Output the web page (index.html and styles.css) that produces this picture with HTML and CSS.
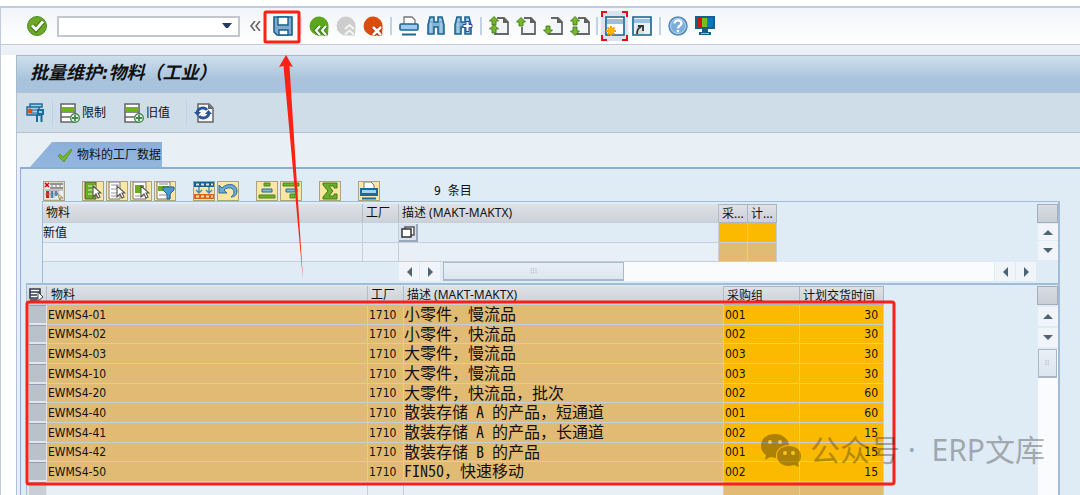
FILE: index.html
```html
<!DOCTYPE html>
<html lang="zh-CN">
<head>
<meta charset="utf-8">
<title>批量维护:物料（工业）</title>
<link rel="stylesheet" href="styles.css">
</head>
<body>
<svg class="sprite" aria-hidden="true">
  <symbol id="page" viewBox="0 0 20 20"><path d="M8 2h7l4 4v12H6v-7" fill="#f2f5f7" stroke="#666" stroke-width="1.800"/><path d="M14 1v6h6z" fill="#606060"/></symbol>
  <symbol id="up" viewBox="0 0 10 10"><path d="M5 .5 9.500 5H7v4H3V5H.5z" fill="#76b82a" stroke="#3f7a1c" stroke-width=".9"/></symbol>
  <symbol id="down" viewBox="0 0 10 10"><path d="M5 9.500 9.500 5H7V1H3v4H.5z" fill="#76b82a" stroke="#3f7a1c" stroke-width=".9"/></symbol>
  <symbol id="bino" viewBox="0 0 20 20"><path d="M4 1h4v5h4V1h4l2 8v9h-6v-7H8v7H2V9z" fill="#85b3d8" stroke="#1b678f" stroke-width="1.600"/><path d="M4 4h3M13 4h3M5 7v10M15 7v10" stroke="#c0daee"/></symbol>
  <symbol id="sheetplus" viewBox="0 0 20 20"><path d="M1 1h14v18H1z" fill="#fff" stroke="#666" stroke-width="1.600"/><path d="M2 4h12v4H2z" fill="#70b31d"/><path d="M1 9h14M1 14h10" stroke="#666" stroke-width="1.300"/><circle cx="15" cy="15" r="4.300" fill="#fff" stroke="#3d8b43" stroke-width="1.400"/><path d="M15 12v6M12 15h6" stroke="#3d8b43" stroke-width="1.800"/></symbol>
  <symbol id="cursor" viewBox="0 0 10 14"><path d="M1 1v11l3-3 2 4 2-1-2-4h3z" fill="#fff" stroke="#555" stroke-width="1.100"/></symbol>
</svg>

<header class="command-bar">
  <button class="tool" aria-label="确认"><svg viewBox="0 0 20 20"><circle cx="10" cy="10" r="9.500" fill="#6da724" stroke="#4b8c2b"/><path d="m5 9.500 4 4 7-8" fill="none" stroke="#42791c" stroke-width="5"/><path d="m5 9.500 4 4 7-8" fill="none" stroke="#fff" stroke-width="2.800"/></svg></button>
  <div class="combo"><input type="text" aria-label="命令"><button aria-label="打开列表"><svg viewBox="0 0 10 6"><path d="M0 0h10L6 5H4z" fill="#24386c"/></svg></button></div>
  <button class="collapse" aria-label="收起"><svg viewBox="0 0 12 10"><path d="M6 0 2 5l4 5M11 0 7 5l4 5" fill="none" stroke="#666" stroke-width="1.600"/></svg></button>
  <button class="tool" aria-label="保存"><svg viewBox="0 0 20 20"><path d="M1 1h18v18H4l-3-3z" fill="#82aacb" stroke="#15628c" stroke-width="1.600"/><path d="M5 1h10v8H5z" fill="#fff" stroke="#15628c" stroke-width="1.400"/><path d="M6 14h9v5H6z" fill="#fff" stroke="#15628c" stroke-width="1.400"/></svg></button>
  <span class="sep faint"></span>
  <button class="tool" aria-label="后退"><svg viewBox="0 0 20 20"><path d="M19.500 11A9.500 9.500 0 1 0 10 19.500h9z" fill="#5ba61c"/><path d="m11 10-4 4.500 4 4.500M17 10l-4 4.500 4 4.500" fill="none" stroke="#347b19" stroke-width="4"/><path d="m11 10-4 4.500 4 4.500M17 10l-4 4.500 4 4.500" fill="none" stroke="#fff" stroke-width="2.200"/></svg></button>
  <button class="tool" aria-label="退出"><svg viewBox="0 0 20 20"><path d="M19.500 11A9.500 9.500 0 1 0 10 19.500h9z" fill="#cdcdcd"/><path d="m9 13 4.500-4 4.500 4M9 18.500l4.500-4 4.500 4" fill="none" stroke="#f5f5f5" stroke-width="2"/></svg></button>
  <button class="tool" aria-label="取消"><svg viewBox="0 0 20 20"><path d="M19.500 11A9.500 9.500 0 1 0 10 19.500h9z" fill="#da4d0c"/><path d="m10 11 8 8m0-8-8 8" stroke="#9f340c" stroke-width="4.500"/><path d="m10 11 8 8m0-8-8 8" stroke="#fff" stroke-width="2.600"/></svg></button>
  <span class="sep"></span>
  <button class="tool" aria-label="打印"><svg viewBox="0 0 20 20"><path d="M5 8V1h8l3 3v4" fill="#fff" stroke="#777" stroke-width="1.300"/><rect x="1" y="8" width="18" height="6" rx="1" fill="#9ccaf0" stroke="#1b678f" stroke-width="1.600"/><path d="M2 15.500h16v1H2z" fill="#fff"/><path d="M3 18.500h14" stroke="#1b678f" stroke-width="2"/></svg></button>
  <button class="tool" aria-label="查找"><svg viewBox="0 0 20 20"><use href="#bino"/></svg></button>
  <button class="tool" aria-label="继续查找"><svg viewBox="0 0 20 20"><use href="#bino"/><path d="M13 5.500h3v3h3v3h-3v4h-3v-4h-3v-3h3z" fill="#fff" stroke="#3345a0"/></svg></button>
  <span class="sep"></span>
  <button class="tool" aria-label="首页"><svg viewBox="0 0 20 20"><use href="#page"/><use href="#up" width="10" height="10"/><use href="#up" y="8" width="10" height="10"/></svg></button>
  <button class="tool" aria-label="上一页"><svg viewBox="0 0 20 20"><use href="#page"/><use href="#up" y="1" width="10" height="10"/></svg></button>
  <button class="tool" aria-label="下一页"><svg viewBox="0 0 20 20"><use href="#page"/><use href="#down" y="9" width="10" height="10"/></svg></button>
  <button class="tool" aria-label="末页"><svg viewBox="0 0 20 20"><use href="#page"/><use href="#up" width="10" height="10"/><use href="#down" y="10" width="10" height="10"/></svg></button>
  <span class="sep narrow"></span>
  <button class="tool focused" aria-label="新建会话"><svg viewBox="0 0 20 20"><path d="M1 1h18v18H1z" fill="#fff" stroke="#15628c" stroke-width="1.600"/><path d="M2 3h16v5H2z" fill="#9ebfd9"/><path d="M6 10v10M1 15h10M2.500 11.500l7 7M9.500 11.500l-7 7" stroke="#ef9c10" stroke-width="2"/><circle cx="6" cy="15" r="3" fill="#ffb600"/></svg></button>
  <button class="tool" aria-label="创建快捷方式"><svg viewBox="0 0 20 20"><path d="M1 1h18v18H1z" fill="#eaf0f5" stroke="#15628c" stroke-width="1.600"/><path d="M2 3h16v4H2z" fill="#9ebfd9"/><path d="M4 9h8v9H4z" fill="#ddd"/><path d="M5 18c0-4 1-6 4-7M6 10h5v5" fill="none" stroke="#333" stroke-width="1.800"/></svg></button>
  <span class="sep"></span>
  <button class="tool" aria-label="帮助"><svg viewBox="0 0 20 20"><circle cx="10" cy="10" r="9" fill="#7baed9" stroke="#548aba" stroke-width="1.500"/><circle cx="10" cy="10" r="7.500" fill="none" stroke="#b3d0e9"/><path d="M6.500 7.500c0-4.500 7-4 7 0 0 2-3.500 2.500-3.500 5M10 14v2.300" fill="none" stroke="#fff" stroke-width="2.300"/></svg></button>
  <button class="tool" aria-label="定制布局"><svg viewBox="0 0 20 20"><path d="M0 0h20v13H0z" fill="#166087"/><path d="M2 2h5v9H2z" fill="#d31414"/><path d="M7 2h5.500v9H7z" fill="#78bd20"/><path d="M12.500 2H18v9h-5.500z" fill="#0878be"/><path d="M7 13h6v3h3v3H4v-3h3z" fill="#166087"/><path d="M6 17.500h8" stroke="#8fbadb"/></svg></button>
</header>

<main class="window">
  <h1 class="title">批量维护:物料（工业）</h1>
  <div class="app-bar">
    <button class="app-tool" aria-label="执行"><svg class="wrench" viewBox="0 0 18 20"><path d="M4 1h12v3H4zM1 4h12v8H1z" fill="#a9cfe6" stroke="#1d6c9a" stroke-width="1.500"/><path d="M12 7h5v4h-5zM10 12h6M11 12v7M15.500 11v8" fill="#a9cfe6" stroke="#1d6c9a" stroke-width="2"/><path d="M5 7h7M5 10h7" stroke="#1d6c9a"/><circle cx="4" cy="8" r="2.500" fill="#d95019"/></svg></button>
    <span class="sep wide"></span>
    <button class="app-tool"><svg viewBox="0 0 20 20"><use href="#sheetplus"/></svg>限制</button>
    <button class="app-tool old"><svg viewBox="0 0 20 20"><use href="#sheetplus"/></svg>旧值</button>
    <span class="sep wide"></span>
    <button class="app-tool" aria-label="刷新"><svg viewBox="0 0 20 20"><path d="M4 1h11l4 4v14H4z" fill="#f5f7fa" stroke="#666" stroke-width="1.500"/><path d="M14 1v5h5z" fill="#666"/><path d="M3 10c1-6 8-6 10-3M15 10c-1 6-8 6-10 3" fill="none" stroke="#2b5296" stroke-width="2.800"/><path d="M0 9h7l-3.500 4zM11 11h7l-3.500-4z" fill="#2b5296"/></svg></button>
  </div>

  <nav class="tabs"><button class="tab"><svg class="tab-check" viewBox="0 0 16 16"><path d="m1 9 2-2 3 3 8-8 1 1-8 12z" fill="#76b82a" stroke="#568e2a" stroke-width=".8"/></svg>物料的工厂数据</button></nav>

  <section class="panel">
    <div class="grid-tools">
      <button class="gt plain" aria-label="删除选择"><svg viewBox="0 0 20 18"><path d="M1 1h18v16H1z" fill="#eee"/><path d="M6 2h13M6 6h13" stroke="#777" stroke-width="1.500"/><path d="M8 2v4M12 2v4M16 2v4" stroke="#888"/><path d="m1 1 4 4m0-4L1 5" stroke="#c00" stroke-width="1.500"/><path d="M2 9h3v7H2z" fill="#cf2020"/><path d="M7 9h2v7H7zM11 9h2v5h-2z" fill="#3c86bd"/><path d="M6 8v8M10 8v8M14 8v4M1 8h18M1 12h12" stroke="#888" stroke-width=".8"/><path d="m13 11 6 5h-3v2z" fill="#ffe58d" stroke="#777" stroke-width=".8"/></svg></button>
      <div class="group">
        <button class="gt" aria-label="全选"><svg viewBox="0 0 20 18"><path d="M2 0h11v17H2z" fill="#69ad1f" stroke="#555"/><path d="M5 4h8M5 8h8M5 12h8" stroke="#e4f0d4"/><use href="#cursor" x="9" y="3" width="10" height="14"/></svg></button>
        <button class="gt" aria-label="取消全选"><svg viewBox="0 0 20 18"><path d="M2 0h11v17H2z" fill="#fff" stroke="#777"/><path d="M4 3h8M4 7h8M4 11h8M4 14h8" stroke="#999"/><use href="#cursor" x="9" y="3" width="10" height="14"/></svg></button>
        <button class="gt" aria-label="选择块"><svg viewBox="0 0 20 18"><path d="M2 0h13v17H2z" fill="#fff" stroke="#777"/><path d="M4 3h9v8H4z" fill="#69ad1f"/><path d="M4 14h9" stroke="#999"/><use href="#cursor" x="9" y="3" width="10" height="14"/></svg></button>
        <button class="gt" aria-label="过滤"><svg viewBox="0 0 20 18"><path d="M2 0h13v17H2z" fill="#fff" stroke="#777"/><path d="M3 4h11v5H3z" fill="#69ad1f"/><path d="M4 2h9M4 13h8" stroke="#888"/><path d="M8 5h11v3l-4 4v5h-3v-5L8 8z" fill="#4c98cc" stroke="#1c6391"/></svg></button>
      </div>
      <div class="group">
        <button class="gt" aria-label="复制值"><svg viewBox="0 0 20 18"><path d="M0 0h20v5H0z" fill="#205f85"/><path d="M2 2.500h3M7 2.500h3M12 2.500h3M17 2.500h2" stroke="#cfe3f4" stroke-width="2"/><path d="M5 5v5M15 5v5M2 8l3 3 3-3M12 8l3 3 3-3" fill="none" stroke="#4189b8" stroke-width="1.400"/><path d="M0 12h20v5H0z" fill="#d9641b"/><path d="M2 14.500h3M7 14.500h3M12 14.500h3M17 14.500h2" stroke="#ffe493" stroke-width="2"/></svg></button>
        <button class="gt" aria-label="撤销"><svg viewBox="0 0 20 18"><path d="M1 3v8h8L6 8c4-4 10-2 10 2 0 2-1 3-3 5 4 0 6-3 6-6 0-7-9-9-15-3z" fill="#70a9d2" stroke="#286c98"/></svg></button>
      </div>
      <div class="group">
        <button class="gt" aria-label="升序"><svg viewBox="0 0 20 18"><path d="M7 1h6v3H7zM2 13h16v3H2z" fill="#70b329" stroke="#478526"/><path d="M5 7h10v3H5z" fill="#85b5d8" stroke="#286c98"/></svg></button>
        <button class="gt" aria-label="降序"><svg viewBox="0 0 20 18"><path d="M2 1h16v3H2zM9 12h5v4H9z" fill="#70b329" stroke="#478526"/><path d="M5 7h11v3H5z" fill="#85b5d8" stroke="#286c98"/></svg></button>
      </div>
      <div class="group"><button class="gt" aria-label="合计"><svg viewBox="0 0 20 18"><path d="M3 1h14v5h-3V4H9l4 5-4 5h5v-2h3v5H3v-2l5-6-5-6z" fill="#6eae25" stroke="#3c7c25"/></svg></button></div>
      <div class="group"><button class="gt" aria-label="打印列表"><svg viewBox="0 0 20 18"><path d="M5 6V0h7l3 3v3" fill="#fff" stroke="#777"/><rect x="1" y="6" width="18" height="8" fill="#1b6a98"/><path d="M3 9.500h14" stroke="#a8d2ee" stroke-width="3"/><path d="M3 16.500h14" stroke="#1b6a98" stroke-width="2"/></svg></button></div>
      <span class="count">9&nbsp; 条目</span>
    </div>

    <section class="frame new-values">
      <div class="grid-main">
        <table class="grid new-grid">
          <colgroup><col class="c-mat"><col class="c-plant"><col class="c-desc"><col class="c-tiny"><col class="c-tiny"></colgroup>
          <thead><tr><th>物料</th><th>工厂</th><th>描述 (MAKT-MAKTX)</th><th class="edge">采...</th><th class="edge">计...</th></tr></thead>
          <tbody>
            <tr><td>新值</td><td></td><td><button class="value-help" aria-label="搜索帮助"><svg viewBox="0 0 14 12"><path d="M4 1h9v8H4z" fill="#fff" stroke="#555" stroke-width="1.500"/><path d="M1 3h9v8H1z" fill="#fff" stroke="#333" stroke-width="1.500"/></svg></button></td><td class="gold"></td><td class="gold"></td></tr>
            <tr class="pale"><td></td><td></td><td></td><td class="tan"></td><td class="tan"></td></tr>
          </tbody>
        </table>
        <div class="hscroll">
          <button class="arrow" aria-label="向左"><i class="left"></i></button><button class="arrow" aria-label="向右"><i class="right"></i></button>
          <div class="track"><div class="thumb"><span class="grip">⁝⁝⁝</span></div></div>
          <button class="arrow" aria-label="向左"><i class="left"></i></button><button class="arrow" aria-label="向右"><i class="right"></i></button>
        </div>
      </div>
      <div class="vscroll"><span class="corner"></span><button class="arrow" aria-label="向上"><i class="top"></i></button><button class="arrow" aria-label="向下"><i class="bottom"></i></button></div>
    </section>

    <section class="frame data">
      <div class="grid-main">
        <table class="grid data-grid">
          <colgroup><col class="c-sel"><col class="c-mat"><col class="c-plant"><col class="c-desc"><col class="c-group"><col class="c-time"></colgroup>
          <thead><tr><th class="select-all"><svg viewBox="0 0 15 14"><path d="M1 1h10v9H1zM1 4h10M1 7h7" fill="#fff" stroke="#33394f" stroke-width="1.600"/><path d="M1 12h7" stroke="#33394f" stroke-width="1.500"/><path d="M9 4v9l5-4z" fill="#fff" stroke="#444"/></svg></th><th>物料</th><th>工厂</th><th>描述 (MAKT-MAKTX)</th><th class="edge">采购组</th><th class="edge">计划交货时间</th></tr></thead>
          <tbody>
            <tr><th></th><td>EWMS4-01</td><td>1710</td><td class="desc">小零件，慢流品</td><td class="gold">001</td><td class="gold num">30</td></tr>
            <tr><th></th><td>EWMS4-02</td><td>1710</td><td class="desc">小零件，快流品</td><td class="gold">002</td><td class="gold num">30</td></tr>
            <tr><th></th><td>EWMS4-03</td><td>1710</td><td class="desc">大零件，慢流品</td><td class="gold">003</td><td class="gold num">30</td></tr>
            <tr><th></th><td>EWMS4-10</td><td>1710</td><td class="desc">大零件，慢流品</td><td class="gold">003</td><td class="gold num">30</td></tr>
            <tr><th></th><td>EWMS4-20</td><td>1710</td><td class="desc">大零件，快流品，批次</td><td class="gold">002</td><td class="gold num">60</td></tr>
            <tr><th></th><td>EWMS4-40</td><td>1710</td><td class="desc">散装存储 A 的产品，短通道</td><td class="gold">001</td><td class="gold num">60</td></tr>
            <tr><th></th><td>EWMS4-41</td><td>1710</td><td class="desc">散装存储 A 的产品，长通道</td><td class="gold">002</td><td class="gold num">15</td></tr>
            <tr><th></th><td>EWMS4-42</td><td>1710</td><td class="desc">散装存储 B 的产品</td><td class="gold">001</td><td class="gold num">15</td></tr>
            <tr><th></th><td>EWMS4-50</td><td>1710</td><td class="desc">FIN50，快速移动</td><td class="gold">002</td><td class="gold num">15</td></tr>
            <tr class="pale"><th></th><td></td><td></td><td></td><td class="tan"></td><td class="tan"></td></tr>
          </tbody>
        </table>
      </div>
      <div class="vscroll tall"><span class="corner"></span><button class="arrow" aria-label="向上"><i class="top"></i></button><button class="arrow" aria-label="向下"><i class="bottom"></i></button><div class="vtrack"><div class="vthumb"><span class="grip">⁝⁝</span></div></div></div>
    </section>
  </section>
</main>

<svg class="annotation" viewBox="0 0 1080 495" aria-hidden="true">
  <g fill="none" stroke="#fc2114" stroke-width="3"><rect x="265" y="12" width="34" height="30" rx="1"/><rect x="27" y="302" width="867" height="182" rx="2"/></g>
  <path d="M286 55 293 67 289.500 66 303 280 283.500 66 279 67z" fill="#fc2114"/>
</svg>
<div class="watermark"><svg viewBox="0 0 42 34"><path d="M15 1C6 1 1 6 1 13c0 4 2 7 5 9l-1 5 5-3 6 1c-1-8 5-13 13-13C28 5 22 1 15 1z"/><path d="M29 13c-7 0-12 4-12 10s5 10 12 10l5-1 5 2-1-4c2-2 3-4 3-7 0-6-5-10-12-10z"/><g class="eyes"><circle cx="10" cy="9" r="2"/><circle cx="20" cy="9" r="2"/><circle cx="25" cy="20" r="2"/><circle cx="33" cy="20" r="2"/></g></svg><span>公众号 ·&nbsp; ERP文库</span></div>
</body>
</html>
```
FILE: styles.css
```css
* { box-sizing: border-box; }
body {
  margin: 0;
  height: 100vh;
  overflow: hidden;
  display: flex;
  flex-direction: column;
  position: relative;
  padding-top: 6px;
  background: #fff;
  color: #111;
  font: 12px/16px "DejaVu Sans Condensed", "Noto Sans CJK SC", sans-serif;
}
button { font: inherit; color: inherit; border: 0; padding: 0; background: none; }
svg { display: block; flex: none; }
.sprite { position: absolute; width: 0; height: 0; }

.command-bar {
  flex: none;
  height: 39px;
  display: flex;
  align-items: center;
  padding-left: 22px;
  border: solid #c1cbdb;
  border-width: 2px 0 1px 1px;
  background: linear-gradient(#f1f4f9, #fff);
}
.tool { width: 27px; height: 27px; display: grid; place-items: center; flex: none; }
.tool svg { width: 20px; height: 20px; }
.combo {
  width: 183px;
  height: 21px;
  margin: 0 8px 0 7px;
  display: flex;
  background: #fff;
  border: 2px solid #c3c6cc;
}
.combo input { flex: 1; min-width: 0; border: 0; padding: 0 2px; background: none; font: inherit; }
.combo button { width: 22px; display: grid; place-items: center; }
.combo svg { width: 10px; height: 6px; }
.collapse { width: 21px; padding-left: 1px; }
.collapse svg { width: 12px; height: 10px; }
.sep { width: 9px; height: 18px; flex: none; background: linear-gradient(#bfd2e6, #bfd2e6) center / 2px 100% no-repeat; }
.sep.faint { opacity: .5; }
.sep.narrow { width: 8px; }
.sep.wide { width: 16px; height: 26px; background-size: 1px 100%; }
.focused {
  height: 30px;
  background:
    linear-gradient(#e3101a, #e3101a) 0 0 / 6px 2px, linear-gradient(#e3101a, #e3101a) 0 0 / 2px 6px,
    linear-gradient(#e3101a, #e3101a) 100% 0 / 6px 2px, linear-gradient(#e3101a, #e3101a) 100% 0 / 2px 6px,
    linear-gradient(#e3101a, #e3101a) 0 100% / 6px 2px, linear-gradient(#e3101a, #e3101a) 0 100% / 2px 6px,
    linear-gradient(#e3101a, #e3101a) 100% 100% / 6px 2px, linear-gradient(#e3101a, #e3101a) 100% 100% / 2px 6px,
    #dde3ee;
  background-repeat: no-repeat;
}

.window {
  flex: 1;
  min-height: 0;
  display: flex;
  flex-direction: column;
  padding: 10px 0 0 15px;
  background: linear-gradient(#eff3f8, #e9eef6) 0 0 / 100% 10px no-repeat, #fff;
  border-left: 1px solid #c1cbdb;
}
.title {
  flex: none;
  margin: 0;
  height: 37px;
  padding: 0 13px;
  border: solid #a9b8ca;
  border-width: 1px 0 0 1px;
  background: linear-gradient(#cedfeb, #a9c3dd 65%, #a9c3dd);
  font: italic bold 18px/33px "DejaVu Sans Condensed", "Noto Sans CJK SC", sans-serif;
}
.app-bar {
  flex: none;
  height: 41px;
  display: flex;
  align-items: center;
  padding-left: 9px;
  border: solid #b4c2d2;
  border-width: 1px 0 1px 1px;
  background: #cfdde9;
}
.app-tool { display: flex; align-items: center; gap: 2px; }
.app-tool svg { width: 20px; height: 20px; }
.app-tool .wrench { width: 18px; }
.old { margin: 0 8px 0 18px; }

.tabs { flex: none; height: 34px; padding: 9px 0 0 13px; background: #e8f0f6; border-left: 1px solid #b4c2d2; }
.tab {
  display: flex;
  align-items: center;
  gap: 4px;
  height: 25px;
  padding: 0 1px 0 27px;
  background: linear-gradient(#8db0db, #93b6df);
  clip-path: polygon(22px 0, 100% 0, 100% 100%, 0 100%);
}
.tab-check { width: 16px; height: 16px; }

.panel {
  flex: 1;
  min-height: 0;
  display: flex;
  flex-direction: column;
  margin-left: 4px;
  padding: 12px 20px 0 5px;
  border: solid #8caed3;
  border-width: 2px 0 0 1px;
  background: #dfebf5;
  box-shadow: -3px 0 #e8f0f6, -4px 0 #b4c2d2;
}
.grid-tools { flex: none; height: 20px; display: flex; align-items: flex-end; padding-left: 17px; gap: 17px; }
.group { display: flex; gap: 2px; }
.gt { width: 22px; height: 20px; display: grid; place-items: center; border: 1px solid #aaa287; background: #fbe7a1; }
.gt.plain { background: #ddd8cc; }
.gt svg { width: 20px; height: 18px; }
.count { margin-left: 37px; padding-bottom: 2px; }

.frame { display: flex; border: solid #9fbcd8; border-width: 1px 2px 0 1px; padding-top: 2px; }
.new-values { flex: none; margin-left: 16px; height: 82px; }
.data { flex: 1; min-height: 0; border-top-width: 2px; padding-top: 1px; }
.grid-main { flex: 1; min-width: 0; overflow: hidden; }
.grid { table-layout: fixed; width: 0; border-collapse: separate; border-spacing: 0; }
.c-sel { width: 20px; }
.c-mat { width: 320px; }
.c-plant { width: 36px; }
.c-desc { width: 320px; }
.c-tiny { width: 29px; }
.c-group { width: 76px; }
.c-time { width: 84px; }
.data-grid .c-mat { width: 321px; }
.grid th, .grid td { padding: 0; text-align: left; font-weight: normal; white-space: nowrap; line-height: 16px; }
.grid thead th {
  height: 19px;
  padding-left: 3px;
  background: linear-gradient(#dee2e5, #cdd1d9);
  border-right: 1px solid #b3bdc9;
  border-bottom: 1px solid #c6ced8;
  font-family: "Noto Sans", "Noto Sans CJK SC", sans-serif;
}
.grid thead .edge { border: 1px solid #aab5c1; border-left: 0; }
.grid td { border-right: 1px solid #c4cfda; border-bottom: 1px solid #c4cfda; }
.new-grid td { height: 20px; }
.new-grid .pale td { height: 19px; }
.pale td { background: #e8eff7; }
.grid .gold { background: #fbba00; }
.grid .tan { background: #e1bb73; }
.value-help { width: 19px; height: 18px; display: grid; place-items: center; background: #d8e2f1; border: solid #9ba9bd; border-width: 0 2px 2px 0; }
.value-help svg { width: 14px; height: 12px; }

.data-grid tbody tr { height: 20px; }
.data-grid tbody tr:nth-child(3n + 2) { height: 19px; }
.data-grid tbody td { background: #e1bb73; padding-left: 1px; }
.data-grid tbody .pale td { background: #e8eff7; }
.data-grid tbody .pale .tan { background: #e1bb73; }
.data-grid tbody .gold { background: #fbba00; }
.data-grid tbody th { background: #b9c2cb; border: solid #e1e6eb; border-width: 0 1px 2px 2px; box-shadow: inset 0 1px #929ead; }
.data-grid tbody .pale th { background: #c9ced6; }
.grid thead .select-all { padding-left: 2px; }
.select-all svg { width: 15px; height: 14px; }
.data-grid thead th:nth-child(2) { padding-left: 4px; }
.data-grid tbody .desc { padding: 0; vertical-align: top; font: 300 16px/16px "Noto Sans Mono CJK SC", "Noto Sans CJK SC", monospace; }
.data-grid tbody .num { padding-right: 5px; text-align: right; }

.hscroll { display: flex; gap: 1px; margin: 0 1px 0 356px; height: 19px; }
.arrow { width: 20px; height: 19px; flex: none; display: grid; place-items: center; background: #f1f5fa; }
.arrow i { border: 5px solid transparent; }
.arrow .left { border-right-color: #4f6474; border-left-width: 0; }
.arrow .right { border-left-color: #4f6474; border-right-width: 0; }
.arrow .top { border-bottom-color: #4f6474; border-top-width: 0; }
.arrow .bottom { border-top-color: #4f6474; border-bottom-width: 0; }
.track { flex: 1; background: #fafbfc; margin-left: 2px; }
.thumb, .vthumb { display: grid; place-items: center; background: linear-gradient(#e9f0f6, #dce6ef); border: 1px solid #a9b7c7; }
.thumb { width: 181px; height: 19px; border-bottom-width: 2px; }
.grip { color: #a0b0c0; font-size: 8px; line-height: 8px; }
.vscroll { width: 21px; flex: none; display: flex; flex-direction: column; align-items: center; gap: 2px; }
.new-values .arrow { height: 19px; }
.new-values .vscroll { gap: 1px; }
.new-values .vscroll .arrow:nth-child(2) { height: 16px; }
.corner { width: 21px; height: 19px; flex: none; background: linear-gradient(#d9dce2, #c9cfd7); border: 1px solid #a5adba; }
.vtrack { flex: 1; width: 20px; background: #fafbfc; }
.vthumb { width: 19px; height: 29px; border-bottom-width: 2px; }

.annotation { position: absolute; left: 0; top: 0; width: 1080px; height: 495px; pointer-events: none; }
.watermark {
  position: absolute;
  right: 35px;
  bottom: 25px;
  display: flex;
  align-items: center;
  gap: 8px;
  opacity: .33;
  color: #222;
  font: 30px/40px "Noto Sans", "Noto Sans CJK SC", sans-serif;
  pointer-events: none;
}
.watermark svg { width: 42px; height: 34px; fill: #111; }
.watermark .eyes { fill: #fbd060; }
```
